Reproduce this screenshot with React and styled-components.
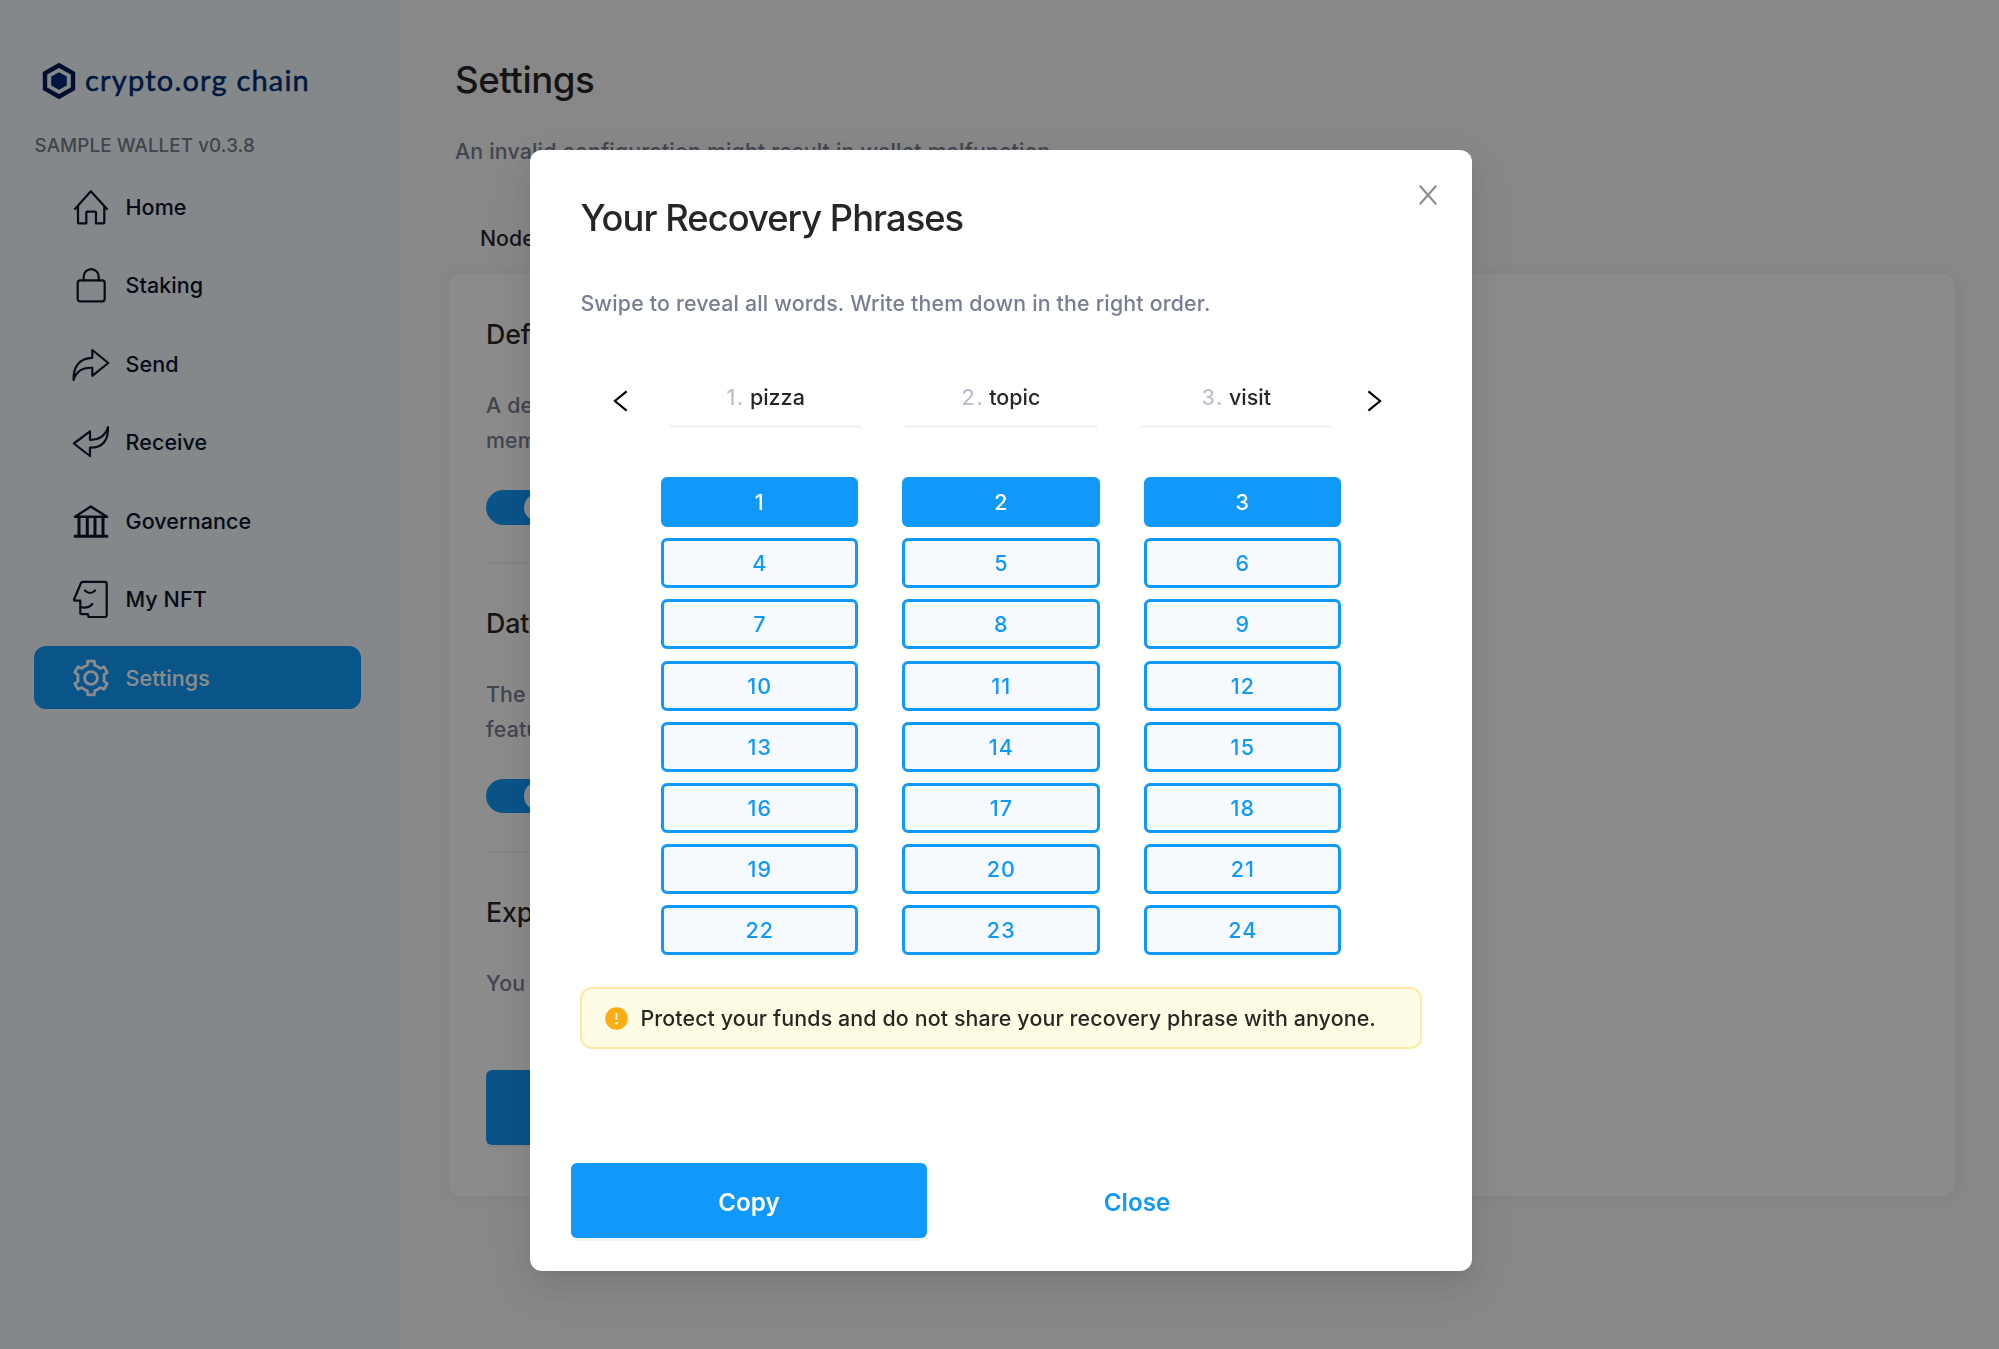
import React from 'react';
import styled, { createGlobalStyle, css } from 'styled-components';

const Global = createGlobalStyle`
  *, *::before, *::after { box-sizing: border-box; }
  html, body { margin: 0; height: 100%; overflow: hidden; }
  body { font-family: Inter, "Liberation Sans", sans-serif; color: rgba(0, 0, 0, 0.85); -webkit-font-smoothing: antialiased; }
  button { font: inherit; border: 0; padding: 0; background: none; cursor: pointer; }
  h1, h2, h3, p { margin: 0; font-weight: 500; }
`;

const Page = styled.div`
  display: flex;
  width: 100vw;
  height: 100vh;
  background: #f7f7f7;
`;

const Sidebar = styled.aside`
  display: flex;
  flex-direction: column;
  flex: none;
  width: 398px;
  padding: 61px 37px 0 34px;
  background: #f0f7fd;
`;

const Brand = styled.div`
  display: flex;
  align-items: center;
  height: 40px;
  padding-left: 7.5px;
  color: #002d74;
`;

const BrandName = styled.span`
  margin: -2px 0 0 9.5px;
  font-family: Lato, sans-serif;
  font-size: 29px;
  line-height: 40px;
  letter-spacing: 1.2px;
  white-space: nowrap;
  -webkit-text-stroke: 0.5px #002d74;
`;

const Version = styled.div`
  margin: 31px 0 16.3px 0.5px;
  font-size: 18.8px;
  font-weight: 500;
  line-height: 27px;
  letter-spacing: 0.1px;
  color: #777c8c;
  white-space: nowrap;
`;

const Nav = styled.nav`
  display: flex;
  flex-direction: column;
  gap: 15.6px;
`;

const NavItem = styled.a`
  display: flex;
  align-items: center;
  height: 62.9px;
  padding-left: 38px;
  border-radius: 12px;
  font-size: 21.5px;
  font-weight: 500;
  letter-spacing: 0.07px;
  color: ${(p) => (p.$active ? '#fff' : '#0b142a')};
  background: ${(p) => (p.$active ? '#1199fa' : 'transparent')};
`;

const NavIcon = styled.svg`
  flex: none;
  width: 38px;
  height: 38px;
  margin-right: 15.5px;
  fill: none;
  stroke: currentColor;
  stroke-width: ${(p) => p.$weight || 2.2};
  stroke-linejoin: round;
  stroke-linecap: round;
`;

const Main = styled.main`
  display: flex;
  flex-direction: column;
  flex: 1;
  padding: 55px 44px 0 51px;
`;

const PageTitle = styled.h1`
  padding-left: 6px;
  font-size: 36.7px;
  line-height: 49px;
  letter-spacing: -0.45px;
`;

const Muted = styled.p`
  font-size: 21.3px;
  line-height: 34.4px;
  letter-spacing: 0.2px;
  color: #777e91;
  white-space: nowrap;
`;

const Subtitle = styled(Muted)`
  margin: 30px 0 53px 6px;
`;

const Tabs = styled.div`
  display: flex;
  margin-left: 31px;
  margin-bottom: 18.5px;
  font-size: 21.3px;
  line-height: 34px;
  font-weight: 500;
`;

const Card = styled.section`
  display: flex;
  flex-direction: column;
  align-items: flex-start;
  height: 922px;
  padding: 40.3px 37px 0;
  border-radius: 12px;
  background: #fdfdfd;
  box-shadow: 0 0 16px rgba(0, 0, 0, 0.05);
`;

const SettingTitle = styled.h3`
  margin-bottom: 34.2px;
  font-size: 26.8px;
  line-height: 40px;
  letter-spacing: -0.2px;
`;

const Toggle = styled.div`
  display: flex;
  justify-content: flex-end;
  width: 69px;
  height: 34.5px;
  margin-top: 32.8px;
  padding: 3.5px;
  border-radius: 18px;
  background: #1199fa;
`;

const Knob = styled.div`
  width: 28px;
  border-radius: 50%;
  background: #fff;
`;

const Rule = styled.div`
  width: 900px;
  height: 2px;
  margin: 37.5px 0 39.2px;
  background: #f0f0f0;
`;

const primary = css`
  height: 75.5px;
  border-radius: 6px;
  background: #1199fa;
  color: #fff;
  box-shadow: 0 3px 0 rgba(0, 0, 0, 0.04);
`;

const ExportButton = styled.button`
  ${primary}
  width: 356px;
  margin-top: 69px;
`;

const Overlay = styled.div`
  position: fixed;
  inset: 0;
  display: flex;
  align-items: flex-start;
  padding: 150px 0 0 530px;
  background: rgba(0, 0, 0, 0.45);
`;

const Dialog = styled.div`
  position: relative;
  display: flex;
  flex-direction: column;
  width: 942px;
  height: 1120.5px;
  padding: 44px 50px 0 50.4px;
  border-radius: 12px;
  background: #fff;
  box-shadow: 0 5px 11px -7px rgba(0, 0, 0, 0.12), 0 11px 29px rgba(0, 0, 0, 0.08), 0 16px 50px 14px rgba(0, 0, 0, 0.05);
`;

const CloseIcon = styled.button`
  position: absolute;
  top: 34.5px;
  right: 35px;
  width: 18px;
  height: 20px;
  color: #8c8c8c;
  svg { display: block; }
`;

const DialogTitle = styled.h2`
  font-size: 36.3px;
  line-height: 49px;
  letter-spacing: -0.95px;
  white-space: nowrap;
`;

const Hint = styled(Muted)`
  margin-top: 43px;
`;

const Carousel = styled.div`
  display: flex;
  align-items: flex-start;
  margin: 57.2px 0 0 32.5px;
  height: 50px;
`;

const Arrow = styled.button`
  width: 15px;
  height: 22px;
  margin-top: 12px;
  color: #000;
  svg { display: block; }
`;

const Words = styled.div`
  display: flex;
  gap: 43.8px;
  margin: 0 35px 0 42px;
`;

const Word = styled.div`
  display: flex;
  justify-content: center;
  gap: 5px;
  width: 191.5px;
  height: 50px;
  border-bottom: 3px solid #f3f3f3;
  font-size: 21.5px;
  font-weight: 500;
  line-height: 38.5px;
`;

const WordIndex = styled.span`
  letter-spacing: 1.5px;
  color: #bdc2ce;
`;

const PhraseGrid = styled.div`
  display: grid;
  grid-template-columns: repeat(3, 197.5px);
  column-gap: 44px;
  grid-auto-rows: 50px;
  row-gap: 11.2px;
  margin: 49.4px 0 0 80.2px;
`;

const PhraseButton = styled.button`
  display: flex;
  align-items: center;
  justify-content: center;
  padding-left: 1px;
  border: 3px solid #1199fa;
  border-radius: 6px;
  background: ${(p) => (p.$active ? '#1199fa' : '#f6f9fe')};
  color: ${(p) => (p.$active ? '#fff' : '#1199fa')};
  font-size: 21.5px;
  font-weight: 500;
  letter-spacing: 1.1px;
`;

const Warning = styled.div`
  display: flex;
  align-items: center;
  height: 62.5px;
  margin-top: 31.5px;
  padding-left: 22.5px;
  border: 2px solid #ffe9a3;
  border-radius: 12px;
  background: #fffce6;
  font-size: 21.4px;
  font-weight: 500;
  letter-spacing: 0.12px;
  white-space: nowrap;
  svg { flex: none; margin-right: 12.5px; }
`;

const Footer = styled.div`
  display: flex;
  margin: 113.5px 0 0 -9.4px;
`;

const CopyButton = styled.button`
  ${primary}
  width: 356px;
  padding-top: 4px;
  font-size: 24.2px;
  font-weight: 600;
`;

const CloseButton = styled.button`
  width: 356px;
  margin-left: 32px;
  padding-top: 4px;
  height: 75.5px;
  color: #1199fa;
  font-size: 24.2px;
  font-weight: 600;
`;

const gear = (() => {
  const pts = [];
  for (let i = 0; i < 6; i++) {
    const base = -90 + i * 60;
    [[-25, 13.2], [-16, 13.3], [-11, 17.2], [11, 17.2], [16, 13.3], [25, 13.2]].forEach(([a, r]) => {
      const t = ((base + a) * Math.PI) / 180;
      pts.push(`${(19 + r * Math.cos(t)).toFixed(2)} ${(19 + r * Math.sin(t)).toFixed(2)}`);
    });
  }
  return `M${pts.join('L')}Z`;
})();

const nav = [
  { label: 'Home', icon: <path d="M3 21L18.8 3.2L35 21M6 18.3V34.5q0 .9.9.9H14.3V24.7q0-1 1-1H23q1 0 1 1V35.4H31.4q.9 0 .9-.9V18.3" /> },
  { label: 'Staking', icon: <><rect x="5.7" y="14.4" width="27" height="21" rx="2.6" /><path d="M11.7 14.4V10.6a7.5 7.5 0 0 1 15 0V14.4" /></> },
  { label: 'Send', icon: <path d="M20.3 5L36.3 18L20.3 30.8V22.8C11 22.4 4.5 25.5 1.6 35C1 22 7.5 13 20.3 12.8Z" /> },
  { label: 'Receive', icon: <path d="M18 8.3L1.8 20.5L18 33V24.7C30 25 36.5 18 36 4C33 13.5 27 17 18 16.8Z" /> },
  { label: 'Governance', icon: <><path d="M3 14.8L18.8 4.6L35 14.8Z" strokeWidth="2.4" /><path d="M7 15.6V34M15.3 15.6V34M23 15.6V34M31 15.6V34M3 34.3H35" strokeWidth="3" /></> },
  { label: 'My NFT', icon: <path d="M9 3q.5-1.1 1.6-1.1H32.7q2 0 2 2V35q0 2-2 2H17.3q-1 0-1-1V35.2q0-1-1-1H9.3q-1 0-1-1V20.6H3q-1.3 0-.9-1.3ZM8.3 27.2C13 28.2 17.5 27.5 20.3 24M13 10.5Q18 15.5 23 10.5" /> },
  { label: 'Settings', active: true, weight: 2.8, icon: <><path d={gear} /><circle cx="19" cy="19" r="6.4" /></> },
];

const words = ['pizza', 'topic', 'visit'];

export default function App() {
  return (
    <>
      <Global />
      <Page>
        <Sidebar>
          <Brand>
            <svg width="34" height="38" viewBox="0 0 34 38">
              <path d="M17 .8L33.2 10V28L17 37.2L.8 28V10Z" fill="#001d52" />
              <path d="M17 6L28.8 12.6V25.4L17 32L5.2 25.4V12.6Z" fill="#f0f7fd" />
              <path d="M17 10.3L24.8 14.6V23.4L17 27.8L9.2 23.4V14.6Z" fill="#002d74" />
            </svg>
            <BrandName>crypto.org chain</BrandName>
          </Brand>
          <Version>SAMPLE WALLET v0.3.8</Version>
          <Nav>
            {nav.map((n) => (
              <NavItem key={n.label} $active={n.active}>
                <NavIcon viewBox="0 0 38 38" $weight={n.weight}>{n.icon}</NavIcon>
                {n.label}
              </NavItem>
            ))}
          </Nav>
        </Sidebar>
        <Main>
          <PageTitle>Settings</PageTitle>
          <Subtitle>An invalid configuration might result in wallet malfunction.</Subtitle>
          <Tabs>Node</Tabs>
          <Card>
            <SettingTitle>Default</SettingTitle>
            <Muted>A default<br />memo</Muted>
            <Toggle><Knob /></Toggle>
            <Rule />
            <SettingTitle>Data</SettingTitle>
            <Muted>The data<br />features</Muted>
            <Toggle><Knob /></Toggle>
            <Rule />
            <SettingTitle>Export</SettingTitle>
            <Muted>You</Muted>
            <ExportButton />
          </Card>
        </Main>
      </Page>
      <Overlay>
        <Dialog role="dialog">
          <CloseIcon aria-label="Close">
            <svg width="18" height="20" viewBox="0 0 18 20" fill="none" stroke="currentColor" strokeWidth="2.1">
              <path d="M.8 .8L17.2 19.2M17.2 .8L.8 19.2" />
            </svg>
          </CloseIcon>
          <DialogTitle>Your Recovery Phrases</DialogTitle>
          <Hint>Swipe to reveal all words. Write them down in the right order.</Hint>
          <Carousel>
            <Arrow aria-label="Previous">
              <svg width="15" height="22" viewBox="0 0 15 22" fill="none" stroke="currentColor" strokeWidth="2.1">
                <path d="M13.6 1.4L1.9 11L13.6 20.6" />
              </svg>
            </Arrow>
            <Words>
              {words.map((w, i) => (
                <Word key={w}><WordIndex>{i + 1}.</WordIndex>{w}</Word>
              ))}
            </Words>
            <Arrow aria-label="Next">
              <svg width="15" height="22" viewBox="0 0 15 22" fill="none" stroke="currentColor" strokeWidth="2.1">
                <path d="M1.4 1.4L13.1 11L1.4 20.6" />
              </svg>
            </Arrow>
          </Carousel>
          <PhraseGrid>
            {Array.from({ length: 24 }, (_, i) => (
              <PhraseButton key={i} $active={i < 3}>{i + 1}</PhraseButton>
            ))}
          </PhraseGrid>
          <Warning>
            <svg width="23" height="23" viewBox="0 0 23 23">
              <circle cx="11.5" cy="11.5" r="11.3" fill="#faad14" />
              <path d="M11.5 6V13" stroke="#fff" strokeWidth="1.6" />
              <circle cx="11.5" cy="16.2" r="1.2" fill="#fff" />
            </svg>
            Protect your funds and do not share your recovery phrase with anyone.
          </Warning>
          <Footer>
            <CopyButton>Copy</CopyButton>
            <CloseButton>Close</CloseButton>
          </Footer>
        </Dialog>
      </Overlay>
    </>
  );
}
